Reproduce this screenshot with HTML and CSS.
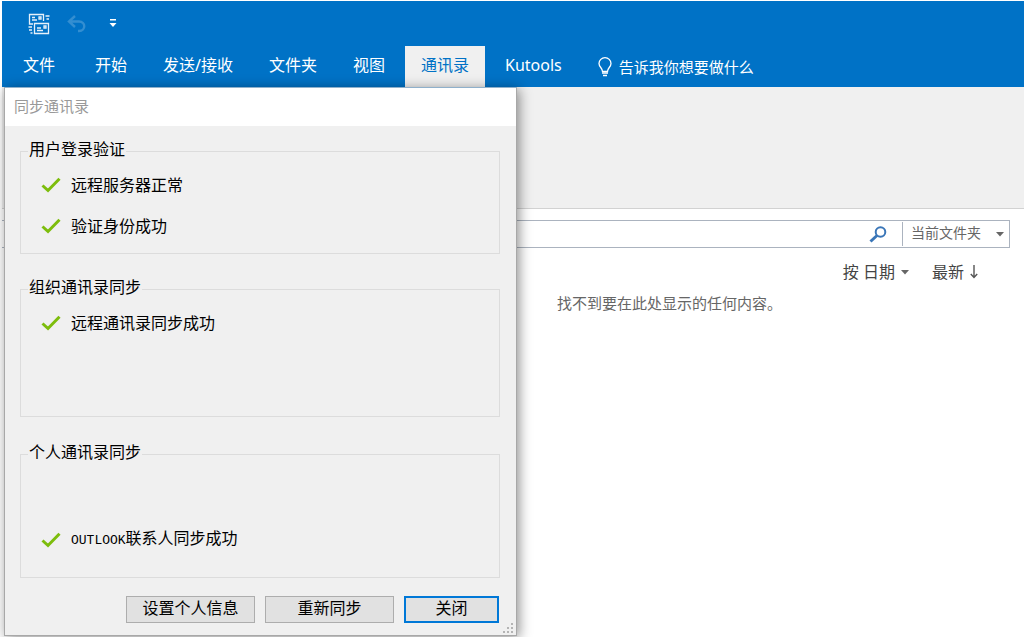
FILE: index.html
```html
<!DOCTYPE html>
<html lang="zh-CN">
<head>
<meta charset="utf-8">
<meta name="viewport" content="width=device-width, initial-scale=1">
<title>同步通讯录</title>
<link rel="stylesheet" href="styles.css">
</head>
<body>
<div class="app">
  <header class="titlebar">
    <div class="quick">
      <button class="quick-btn" type="button" aria-label="发送/接收所有文件夹">
        <svg width="22" height="22" viewBox="0 0 22 22" fill="none" stroke="#e6f1fa" stroke-width="1.3">
          <path d="M5 11H1.5V1.5h14V8M4 4.500h3M4 7h5M11 4h2v2h-2z"/>
          <path d="M6.500 10.500h14v10h-14zM9 15h4M9 17.500h6M16 13h2v2h-2z"/>
          <path d="M17.500 3h4M18.500 6h2.500M0.500 14h3.500M1 17h3M2.500 20h2"/>
        </svg>
      </button>
      <button class="quick-btn undo" type="button" aria-label="撤消" disabled>
        <svg width="20" height="18" viewBox="0 0 20 18" fill="none" stroke="#338ed1" stroke-width="2.400">
          <path d="M8 1L2 6.500 8 12M2.500 6.500H12c7 0 7 9.500 0 9.500h-1"/>
        </svg>
      </button>
      <button class="quick-btn more" type="button" aria-label="自定义快速访问工具栏">
        <svg width="8" height="9" viewBox="0 0 8 9" fill="#fff"><path d="M1 0h6v1.500H1zM0.500 4h7L4 8z"/></svg>
      </button>
    </div>
    <nav class="tabs">
      <button class="tab file" type="button">文件</button>
      <button class="tab" type="button">开始</button>
      <button class="tab" type="button">发送/接收</button>
      <button class="tab" type="button">文件夹</button>
      <button class="tab" type="button">视图</button>
      <button class="tab active" type="button">通讯录</button>
      <button class="tab" type="button">Kutools</button>
      <button class="tell" type="button">
        <svg width="14" height="20" viewBox="0 0 14 20" fill="none" stroke="#fff" stroke-width="1.300">
          <path d="M4.500 14.500C4.500 11 1 10 1 6.500a6 5.800 0 0 1 12 0C13 10 9.500 11 9.500 14.500z"/>
          <path d="M4 16h6M5 18.500h4"/>
        </svg>
        告诉我你想要做什么
      </button>
    </nav>
  </header>
  <div class="ribbon"></div>
  <main class="list">
    <form class="search">
      <input class="search-text" type="text" aria-label="搜索">
      <button class="search-btn" type="button" aria-label="搜索">
        <svg width="18" height="17" viewBox="0 0 18 17" fill="none" stroke="#3a76b8">
          <circle cx="11.500" cy="6" r="4.800" stroke-width="2"/><path d="M8 9.500L1.500 15.500" stroke-width="3"/>
        </svg>
      </button>
      <div class="scope">
        <select class="scope-select" aria-label="搜索范围"><option>当前文件夹</option></select>
        <svg class="scope-arrow" width="8" height="5" viewBox="0 0 8 5" fill="#666"><path d="M0 0h8L4 4.500z"/></svg>
      </div>
    </form>
    <div class="sort">
      <button class="sort-btn" type="button">按 日期
        <svg width="8" height="5" viewBox="0 0 8 5" fill="#666"><path d="M0 0h8L4 4.500z"/></svg>
      </button>
      <button class="sort-btn" type="button">最新
        <svg width="8" height="14" viewBox="0 0 8 14" fill="none" stroke="#555" stroke-width="1.400"><path d="M4 0v12.500M0.800 9L4 12.500 7.200 9"/></svg>
      </button>
    </div>
    <p class="empty">找不到要在此处显示的任何内容。</p>
  </main>

  <section class="dialog" role="dialog" aria-labelledby="dialog-title">
    <h1 class="dialog-title" id="dialog-title">同步通讯录</h1>
    <div class="dialog-body">
      <fieldset class="group login">
        <legend>用户登录验证</legend>
        <p class="status"><svg class="check" viewBox="0 0 20 16"><path d="M1.500 8.500L7 13.500 18.500 1.800"/></svg>远程服务器正常</p>
        <p class="status"><svg class="check" viewBox="0 0 20 16"><path d="M1.500 8.500L7 13.500 18.500 1.800"/></svg>验证身份成功</p>
      </fieldset>
      <fieldset class="group org">
        <legend>组织通讯录同步</legend>
        <p class="status"><svg class="check" viewBox="0 0 20 16"><path d="M1.500 8.500L7 13.500 18.500 1.800"/></svg>远程通讯录同步成功</p>
      </fieldset>
      <fieldset class="group personal">
        <legend>个人通讯录同步</legend>
        <p class="status"><svg class="check" viewBox="0 0 20 16"><path d="M1.500 8.500L7 13.500 18.500 1.800"/></svg><span><span class="mono">OUTLOOK</span>联系人同步成功</span></p>
      </fieldset>
      <div class="actions">
        <button class="btn wide" type="button">设置个人信息</button>
        <button class="btn wide" type="button">重新同步</button>
        <button class="btn primary" type="button">关闭</button>
      </div>
    </div>
    <svg class="grip" width="11" height="11" viewBox="0 0 11 11" fill="#b4b4b4">
      <path d="M8 0h2v2H8zM4 4h2v2H4zM8 4h2v2H8zM0 8h2v2H0zM4 8h2v2H4zM8 8h2v2H8z"/>
    </svg>
  </section>
</div>
</body>
</html>
```
FILE: styles.css
```css
* { box-sizing: border-box; }
body {
  margin: 0;
  background: #fff;
  color: #000;
  font: 16px/20px "Noto Sans", "Noto Sans CJK SC", sans-serif;
}
button, input, select { font: inherit; color: inherit; }
button { border: 0; padding: 0; background: none; }
svg { display: block; flex: none; }
p { margin: 0; }

.app {
  position: relative;
  display: flex;
  flex-direction: column;
  min-height: 100vh;
  padding: 1px 0 0 2px;
  overflow: hidden;
}
.titlebar { background: #0072c6; color: #fff; }
.quick {
  display: flex;
  align-items: center;
  height: 45px;
  padding-left: 26px;
}
.undo { margin-left: 17px; }
.more { margin-left: 22px; }
.tabs { display: flex; height: 41px; padding-left: 5px; white-space: nowrap; }
.tab { padding: 0 16px 3px; margin-right: 4px; }
.tab.file { margin-right: 8px; }
.tab.active { background: #f0f0f0; color: #0072c6; }
.tell {
  display: flex;
  align-items: center;
  gap: 7px;
  margin-left: 16px;
  font-size: 15px;
}

.ribbon { height: 122px; background: #f0f0f0; border-bottom: 1px solid #d2d2d2; }
.list { flex: 1; padding: 11px 14px 0 0; }
.search {
  display: flex;
  height: 28px;
  border: 1px solid #abb3bf;
  border-left: 0;
  background: #fff;
}
.search-text { flex: 1; min-width: 0; border: 0; outline: 0; padding: 0 8px; }
.search-btn { padding: 0 15px 0 8px; }
.scope {
  display: flex;
  align-items: center;
  width: 107px;
  margin: 1px 0;
  padding-right: 5px;
  border-left: 1px solid #abb3bf;
}
.scope-select {
  flex: 1;
  min-width: 0;
  appearance: none;
  border: 0;
  padding: 0 0 2px 8px;
  background: none;
  color: #666;
  font-size: 14px;
}
.sort {
  display: flex;
  justify-content: flex-end;
  gap: 23px;
  padding: 14px 32px 0 0;
  color: #444;
}
.sort-btn { display: flex; align-items: center; gap: 6px; }
.empty { padding: 11px 0 0 555px; color: #666; font-size: 15px; white-space: nowrap; }

.dialog {
  position: absolute;
  top: 87px;
  left: 4px;
  width: 513px;
  border: 1px solid #a8a8a8;
  border-top-color: #8fb0cb;
  background: #f0f0f0;
  box-shadow: 2px 2px 12px rgba(0, 0, 0, 0.45);
}
.dialog-title {
  margin: 0;
  padding: 8px 9px 10px;
  background: #fff;
  color: #999;
  font-size: 15px;
  font-weight: 400;
}
.dialog-body { padding: 13px 16px 12px 15px; }
.group {
  min-width: 0;
  margin: 0;
  padding: 0 20px;
  border: 1px solid #dcdcdc;
}
.group legend { margin-left: -13px; padding: 0 1px 4px; }
.login { height: 115px; }
.org { height: 140px; margin-top: 23px; }
.personal { height: 136px; margin-top: 25px; }
.status { display: flex; align-items: center; gap: 10px; margin-top: 12px; }
.status + .status { margin-top: 21px; }
.personal .status { margin-top: 62px; }
.check {
  width: 20px;
  height: 16px;
  fill: none;
  stroke: #7dbd0c;
  stroke-width: 3;
}
.mono { font-family: "Liberation Mono", monospace; font-size: 13px; }
.actions { display: flex; justify-content: flex-end; gap: 10px; padding: 18px 1px 0 0; }
.btn {
  width: 95px;
  height: 27px;
  padding-bottom: 3px;
  border: 1px solid #adadad;
  background: #e1e1e1;
}
.btn.wide { width: 129px; }
.btn.primary { border: 2px solid #0078d7; }
.grip { position: absolute; right: 2px; bottom: 1px; }
```
